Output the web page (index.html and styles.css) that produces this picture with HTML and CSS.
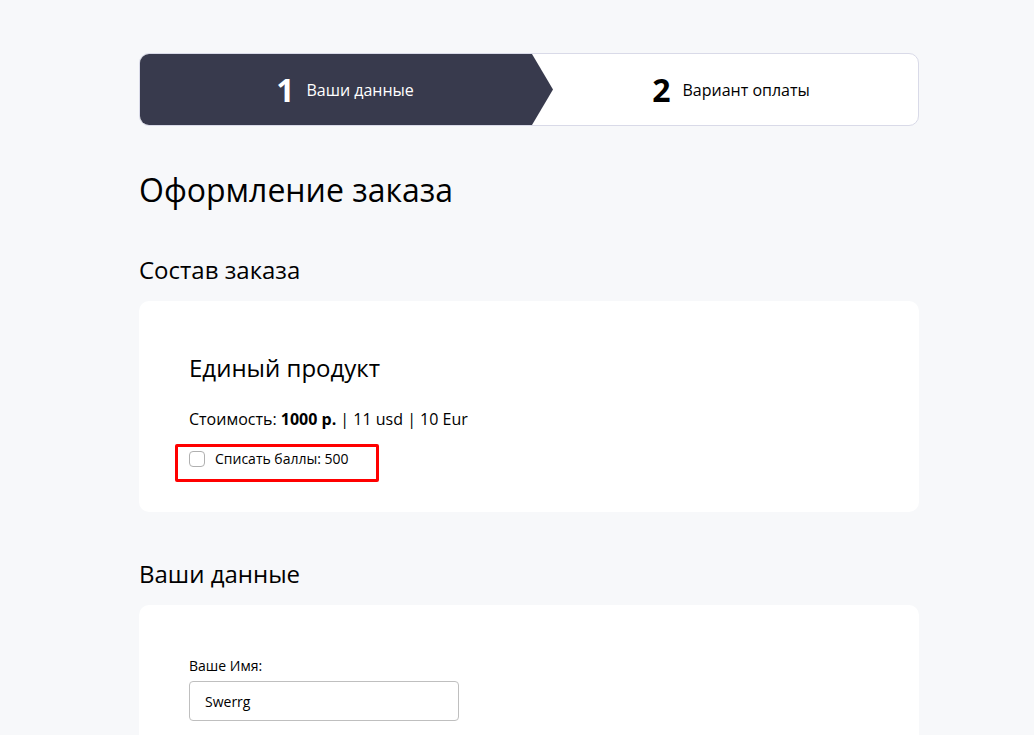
FILE: index.html
```html
<!DOCTYPE html>
<html lang="ru">
<head>
<meta charset="utf-8">
<meta name="viewport" content="width=device-width, initial-scale=1">
<title>Оформление заказа</title>
<link rel="stylesheet" href="styles.css">
</head>
<body>
<main class="page">
  <ol class="steps">
    <li class="step step-active"><span class="step-number">1</span><span>Ваши данные</span>
      <svg class="step-arrow" viewBox="0 0 21 72" preserveAspectRatio="none" aria-hidden="true"><path d="M0 0L21 36L0 72Z"/></svg>
    </li>
    <li class="step"><span class="step-number">2</span><span>Вариант оплаты</span></li>
  </ol>
  <h1 class="title">Оформление заказа</h1>
  <form>
    <section class="section">
      <h2 class="heading">Состав заказа</h2>
      <div class="card">
        <h3 class="product">Единый продукт</h3>
        <p class="price">Стоимость: <strong>1000 р.</strong> | 11 usd | 10 Eur</p>
        <div class="points">
          <input class="checkbox" type="checkbox" id="points">
          <label for="points">Списать баллы: 500</label>
        </div>
      </div>
    </section>
    <section class="section">
      <h2 class="heading">Ваши данные</h2>
      <div class="card">
        <label class="label" for="name">Ваше Имя:</label>
        <input class="field" type="text" id="name" value="Swerrg">
      </div>
    </section>
  </form>
</main>
</body>
</html>
```
FILE: styles.css
```css
* {
  box-sizing: border-box;
}

body {
  margin: 0;
  background: #f7f8fa;
  color: #000;
  font: 16px/24px "Open Sans", sans-serif;
}

.page {
  max-width: 780px;
  margin: 0 115px 0 139px;
  padding-top: 53px;
}

.steps {
  display: flex;
  margin: 0 0 40px;
  padding: 0;
  list-style: none;
  background: #fff;
  border: 1px solid #d9dae8;
  border-radius: 10px;
}

.step {
  position: relative;
  display: flex;
  flex: 1;
  align-items: center;
  justify-content: center;
  gap: 12px;
  height: 71px;
  padding-left: 12px;
}

.step-active {
  padding-left: 18px;
  background: #383a4d;
  color: #fff;
  border-radius: 9px 0 0 9px;
}

.step-number {
  font-size: 32px;
  font-weight: 700;
}

.step-arrow {
  position: absolute;
  left: 100%;
  top: 0;
  width: 21px;
  height: 100%;
  fill: #383a4d;
}

.title {
  margin: 0 0 38px;
  font-size: 32px;
  line-height: 48px;
  font-weight: 400;
}

.section {
  margin-bottom: 44px;
}

.heading {
  margin: 0 0 13px;
  font-size: 24px;
  line-height: 36px;
  font-weight: 400;
}

.card {
  padding: 50px 50px 30px;
  background: #fff;
  border-radius: 10px;
}

.product {
  margin: 0 0 22px;
  font-size: 24px;
  line-height: 34px;
  font-weight: 400;
}

.price {
  margin: 0 0 13px;
}

.points {
  display: flex;
  align-items: flex-start;
  width: fit-content;
  height: 38px;
  margin-left: -14px;
  padding: 0 27px 0 11px;
  gap: 10px;
  border: 3px solid #f00;
  border-radius: 2px;
  font-size: 14px;
}

.checkbox {
  appearance: none;
  width: 16px;
  height: 16px;
  margin: 4px 0;
  background: #fff;
  border: 1px solid #b0b0b0;
  border-radius: 4px;
}

.label {
  display: block;
  margin-bottom: 4px;
  font-size: 14px;
  line-height: 22px;
}

.field {
  display: block;
  width: 270px;
  max-width: 100%;
  height: 40px;
  padding: 0 15px;
  border: 1px solid #bfbfbf;
  border-radius: 4px;
  background: #fff;
  color: #000;
  font: 14px/20px "Open Sans", sans-serif;
}
```
